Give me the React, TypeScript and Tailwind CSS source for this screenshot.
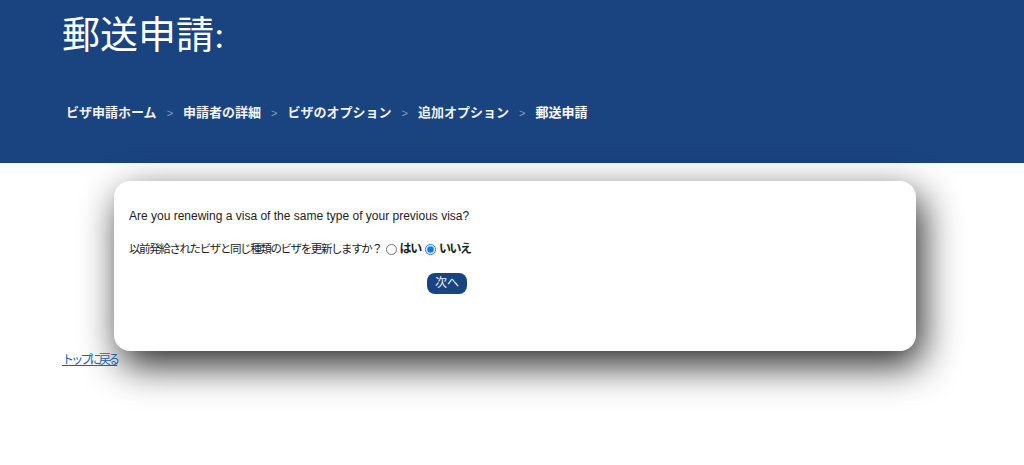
import React, { useState } from 'react'

const crumbs = ['ビザ申請ホーム', '申請者の詳細', 'ビザのオプション', '追加オプション']

export default function App() {
  const [renew, setRenew] = useState<'yes' | 'no'>('no')

  return (
    <div className="min-h-screen bg-white" style={{ fontFamily: '"Liberation Sans", "Noto Sans CJK JP", sans-serif' }}>
      <header className="h-[163px] bg-[#1a4480] px-[62px] pt-[13px]">
        <h1 className="text-[38px] leading-[44px] text-white" style={{ fontFamily: '"Liberation Serif", "Noto Sans CJK JP", serif' }}>
          郵送申請:
        </h1>
        <nav className="mt-[46px] flex items-center pl-[4px] text-[13px] font-semibold text-[#f1f1f1]">
          {crumbs.map((c) => (
            <React.Fragment key={c}>
              <span>{c}</span>
              <span className="mx-[10px] text-[11px] font-normal text-[#8a9bb8]">&gt;</span>
            </React.Fragment>
          ))}
          <span className="font-bold text-white">郵送申請</span>
        </nav>
      </header>

      <main className="px-[62px] pt-[18px]">
        <div className="ml-[52px] w-[802px] rounded-[16px] bg-white px-[15px] pt-[27px] pb-[57px] shadow-[6px_14px_38px_rgba(0,0,0,0.85)] text-[12px] text-[#222]">
          <p className="leading-[16px]">Are you renewing a visa of the same type of your previous visa?</p>
          <div className="mt-[17px] flex items-center leading-[16px]">
            <span className="text-[11.5px] tracking-[-1.4px]">以前発給されたビザと同じ種類のビザを更新しますか？</span>
            <label className="ml-[4px] flex items-center gap-[3px] font-bold tracking-[-1.2px]">
              <input
                type="radio"
                name="renew"
                checked={renew === 'yes'}
                onChange={() => setRenew('yes')}
                className="h-[11px] w-[11px] accent-[#1a73e8]"
              />
              はい
            </label>
            <label className="ml-[4px] flex items-center gap-[3px] font-bold tracking-[-1.6px]">
              <input
                type="radio"
                name="renew"
                checked={renew === 'no'}
                onChange={() => setRenew('no')}
                className="h-[11px] w-[11px] accent-[#1a73e8]"
              />
              いいえ
            </label>
          </div>
          <div className="mt-[16px] pl-[298px]">
            <button className="h-[21px] w-[40px] rounded-[8px] bg-[#1a4480] text-[12px] leading-[21px] text-[#e8eef7]">
              次へ
            </button>
          </div>
        </div>
        <a href="#" className="block w-fit pt-[1px] text-[12px] leading-[16px] tracking-[-2.8px] text-[#1f5fa6] underline">
          トップに戻る
        </a>
      </main>
    </div>
  )
}
